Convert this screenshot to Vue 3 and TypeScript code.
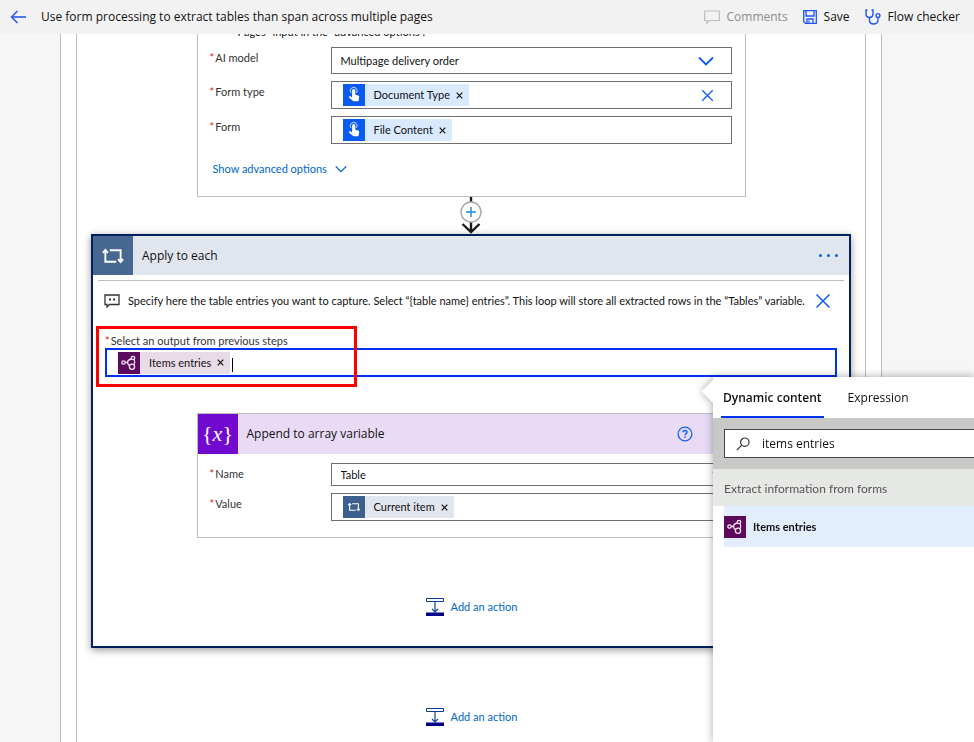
<script setup lang="ts">
import { ref } from 'vue'

const model = ref('Multipage delivery order')
const variableName = ref('Table')
const search = ref('items entries')
const outputText = ref('')
const formType = ref('')
const form = ref('')
const value = ref('')
const activeTab = ref<'dynamic' | 'expression'>('dynamic')
</script>

<template>
  <div class="app">
    <svg class="sprite" aria-hidden="true">
      <symbol id="touch" viewBox="0 0 22 22">
        <path d="M8 8.800a3.400 3.400 0 1 1 5.400 0" fill="none" stroke="#cfe3ff" stroke-width="1" />
        <path d="M9.100 6.700a1.600 1.600 0 0 1 3.200 0v4.100l2.800.7c.8.2 1.200.7 1.100 1.500l-.5 3.200c-.1.7-.6 1.100-1.300 1.100h-3.500c-.6 0-1-.2-1.400-.7L6 13.400c-.3-.4-.2-.8.1-1 .5-.4 1.200-.3 1.700.1l1.300 1z" fill="#fff" />
      </symbol>
      <symbol id="loop" viewBox="0 0 22 22">
        <path d="M8.500 6.500h8.500v9M13.500 15.500H5v-9" fill="none" stroke="#fff" stroke-width="1.500" />
        <path d="M3 8.500L5 6.300L7 8.500M15 13.500L17 15.700L19 13.500" fill="none" stroke="#fff" stroke-width="1.500" />
      </symbol>
      <symbol id="nodes" viewBox="0 0 22 22">
        <g fill="none" stroke="#f3e3f3" stroke-width="1.300">
          <circle cx="5.500" cy="10.500" r="1.700" />
          <circle cx="15" cy="6" r="1.700" />
          <circle cx="14" cy="14.800" r="2.600" />
          <path d="M7.200 10.500h2.400M13.400 7C11 7.400 9.600 8.800 9.600 10.500c0 1.300.8 2.400 2 3M16 7.500c1 1.500 1 3.200 0 5.200" />
        </g>
      </symbol>
      <symbol id="cross" viewBox="0 0 16 16">
        <path d="M1.500 1.500l13 13M14.500 1.500l-13 13" fill="none" stroke="currentColor" stroke-width="1.500" />
      </symbol>
      <symbol id="remove" viewBox="0 0 7 7">
        <path d="M.7.7l5.600 5.600M6.300.7L.7 6.300" fill="none" stroke="#111" stroke-width="1.200" />
      </symbol>
      <symbol id="chevron" viewBox="0 0 16 10">
        <path d="M1 1.500l7 7l7-7" fill="none" stroke="currentColor" stroke-width="1.800" />
      </symbol>
      <symbol id="insert" viewBox="0 0 20 20">
        <path d="M1.500 1.500h17v3h-17z" fill="#fff" stroke="#0a3a9c" />
        <path d="M10 5v10M7 12l3 3l3-3" fill="none" stroke="#0a4aa8" stroke-width="1.200" />
        <path d="M1 15.500h18v3.500H1z" fill="#00008c" />
      </symbol>
    </svg>

    <header class="topbar">
      <button class="icon-btn back" aria-label="Back">
        <svg width="16" height="14" viewBox="0 0 16 14"><path d="M16 7H1.500M7.500 1l-6 6l6 6" fill="none" stroke="#1f4fff" stroke-width="1.400" /></svg>
      </button>
      <h1>Use form processing to extract tables than span across multiple pages</h1>
      <nav class="commands">
        <button class="command" disabled>
          <svg width="16" height="14" viewBox="0 0 16 14"><path d="M.7 1h14.600v9.500H5.500L2.800 13v-2.500H.7z" fill="none" stroke="#bdbdbd" stroke-width="1.200" /></svg>
          Comments
        </button>
        <button class="command">
          <svg width="14" height="14" viewBox="0 0 14 14" fill="none" stroke="#1c54f5" stroke-width="1.300"><path d="M.7.7h12.600v12.600H2.500L.7 11.500zM3 1v5h8V1M4 13V9h6v4M6 10.500v2" /></svg>
          Save
        </button>
        <button class="command">
          <svg width="16" height="16" viewBox="0 0 16 16" fill="none" stroke="#1c54f5" stroke-width="1.400"><path d="M2.500 1H1v3.500C1 7 2.500 8.500 4.500 8.500S8 7 8 4.500V1H6.500M4.500 8.500V11c0 2.500 1.500 4 4 4s4.500-1.500 4.500-4V8.500" /><circle cx="13" cy="6.500" r="1.900" /></svg>
          Flow checker
        </button>
      </nav>
    </header>

    <main class="canvas">
      <div class="scope-outer">
        <div class="scope-inner">
          <section class="card form-card">
            <p class="hint">"Pages" input in the "advanced options".</p>
            <div class="fields">
              <label class="field-label" for="model"><i>*</i>AI model</label>
              <div class="field model">
                <select id="model" v-model="model"><option>Multipage delivery order</option></select>
                <svg class="field-icon" width="16" height="10"><use href="#chevron" /></svg>
              </div>
              <label class="field-label" for="form-type"><i>*</i>Form type</label>
              <div class="field">
                <span class="token blue">
                  <svg width="22" height="22"><use href="#touch" /></svg>
                  Document Type
                  <button aria-label="Remove Document Type"><svg width="7" height="7"><use href="#remove" /></svg></button>
                </span>
                <input id="form-type" v-model="formType" />
                <button class="icon-btn field-icon" aria-label="Clear"><svg width="13" height="13"><use href="#cross" /></svg></button>
              </div>
              <label class="field-label" for="form"><i>*</i>Form</label>
              <div class="field">
                <span class="token blue">
                  <svg width="22" height="22"><use href="#touch" /></svg>
                  File Content
                  <button aria-label="Remove File Content"><svg width="7" height="7"><use href="#remove" /></svg></button>
                </span>
                <input id="form" v-model="form" />
              </div>
            </div>
            <button class="link-btn advanced">
              Show advanced options
              <svg width="12" height="8"><use href="#chevron" /></svg>
            </button>
          </section>

          <button class="connector" aria-label="Insert a step">
            <svg width="24" height="37" viewBox="0 0 24 37">
              <path d="M12 0v5M12 25v10M3.500 27l8.500 8l8.500-8" fill="none" stroke="#1a1a1a" stroke-width="2.400" />
              <circle cx="12" cy="15" r="10" fill="#fff" stroke="#aaa" stroke-width="1.500" />
              <path d="M12 10v10M7 15h10" stroke="#1c86d8" stroke-width="1.400" />
            </svg>
          </button>

          <section class="loop-card">
            <header class="loop-head">
              <span class="loop-icon"><svg width="28" height="28"><use href="#loop" /></svg></span>
              <h2>Apply to each</h2>
              <button class="icon-btn more" aria-label="More"><i></i><i></i><i></i></button>
            </header>
            <div class="note">
              <svg width="16" height="14" viewBox="0 0 16 14"><path d="M1 1h14v9.500H5.500L3 13v-2.500H1z" fill="none" stroke="#333" stroke-width="1.300" /><path d="M5 4.500h2v2H5zM9 4.500h2v2H9z" fill="#333" /></svg>
              <p>Specify here the table entries you want to capture. Select “{table name} entries”. This loop will store all extracted rows in the “Tables” variable.</p>
              <button class="icon-btn" aria-label="Dismiss"><svg width="16" height="16"><use href="#cross" /></svg></button>
            </div>
            <div class="output">
              <label class="field-label" for="output"><i>*</i>Select an output from previous steps</label>
              <div class="field focused">
                <span class="token plum">
                  <svg width="22" height="22"><use href="#nodes" /></svg>
                  Items entries
                  <button aria-label="Remove Items entries"><svg width="7" height="7"><use href="#remove" /></svg></button>
                </span>
                <span class="caret"></span>
                <input id="output" v-model="outputText" />
              </div>
              <div class="highlight"></div>
            </div>

            <section class="card append-card">
              <header class="append-head">
                <span class="var-icon">{<em>x</em>}</span>
                <h2>Append to array variable</h2>
                <button class="icon-btn" aria-label="Help">
                  <svg width="16" height="16" viewBox="0 0 16 16" fill="none" stroke="#1464f0" stroke-width="1.300"><circle cx="8" cy="8" r="6.900" /><path d="M6 6.300c0-1.200.9-1.900 2-1.900s2 .7 2 1.800c0 1.300-2 1.500-2 3.100M8 10.400v1.500" stroke-width="1.500" /></svg>
                </button>
              </header>
              <div class="fields">
                <label class="field-label" for="name"><i>*</i>Name</label>
                <div class="field name">
                  <select id="name" v-model="variableName"><option>Table</option></select>
                  <svg class="field-icon" width="16" height="10"><use href="#chevron" /></svg>
                </div>
                <label class="field-label" for="value"><i>*</i>Value</label>
                <div class="field">
                  <span class="token slate">
                    <svg width="22" height="22"><use href="#loop" x="3" y="3" width="16" height="16" /></svg>
                    Current item
                    <button aria-label="Remove Current item"><svg width="7" height="7"><use href="#remove" /></svg></button>
                  </span>
                  <input id="value" v-model="value" />
                </div>
              </div>
            </section>

            <button class="link-btn add"><svg width="20" height="20"><use href="#insert" /></svg>Add an action</button>
          </section>

          <button class="link-btn add"><svg width="20" height="20"><use href="#insert" /></svg>Add an action</button>
        </div>
      </div>
    </main>

    <aside class="picker">
      <div class="tabs" role="tablist">
        <button role="tab" :class="{ active: activeTab === 'dynamic' }" @click="activeTab = 'dynamic'">Dynamic content</button>
        <button role="tab" :class="{ active: activeTab === 'expression' }" @click="activeTab = 'expression'">Expression</button>
      </div>
      <div class="search">
        <label class="search-box">
          <svg width="14" height="14" viewBox="0 0 14 14" fill="none" stroke="#333" stroke-width="1.200"><circle cx="8.800" cy="5.200" r="4.200" /><path d="M5.800 8.200L.8 13.200" /></svg>
          <input v-model="search" aria-label="Search dynamic content" />
        </label>
      </div>
      <h3>Extract information from forms</h3>
      <button class="result">
        <svg width="22" height="22"><use href="#nodes" /></svg>
        Items entries
      </button>
    </aside>
  </div>
</template>

<style>
body {
  margin: 0;
}
</style>

<style scoped>
.app {
  position: relative;
  display: flex;
  flex-direction: column;
  height: 100vh;
  overflow: hidden;
  background: #f6f6f6;
  color: #111;
  font-family: Lato, "Open Sans", sans-serif;
  font-size: 11px;
  line-height: 16px;
}
.app * {
  box-sizing: border-box;
}
.sprite {
  position: absolute;
  width: 0;
  height: 0;
}
svg {
  display: block;
  flex: none;
}
h1, h2, h3, p {
  margin: 0;
  font-weight: 400;
}
button, input, select {
  margin: 0;
  padding: 0;
  border: 0;
  background: none;
  color: inherit;
  font: inherit;
  outline: 0;
}
.topbar, h2, .tabs button, .search-box {
  font-family: "Open Sans", "Noto Sans", sans-serif;
  font-size: 12px;
}
.icon-btn {
  color: #0a5cf0;
}

.topbar {
  position: relative;
  z-index: 1;
  display: flex;
  flex: none;
  align-items: center;
  height: 34px;
  padding: 0 14px 0 10px;
  background: #f2f2f2;
}
.topbar h1 {
  margin-left: 15px;
  font-size: 12px;
}
.commands {
  display: flex;
  gap: 15px;
  margin-left: auto;
}
.command {
  display: flex;
  align-items: center;
  gap: 7px;
}
.command:disabled {
  color: #8c8c8c;
}

.canvas {
  display: flex;
  flex: 1;
  justify-content: center;
  min-height: 0;
  padding-right: 32px;
}
.scope-outer {
  width: 822px;
  padding: 0 15px;
  border: solid #bdbdbd;
  border-width: 0 1px;
  background: #fff;
}
.scope-inner {
  display: flex;
  flex-direction: column;
  height: 100%;
  padding: 0 14px;
  border: solid #bdbdbd;
  border-width: 0 1px;
}
.card {
  align-self: center;
  width: 549px;
  border: 1px solid #bdbdbd;
  background: #fff;
}
.form-card {
  flex: none;
  margin-top: -9px;
  padding-bottom: 19px;
}
.hint {
  margin-left: 36px;
  padding-bottom: 9px;
  line-height: 12px;
}
.fields {
  display: grid;
  grid-template-columns: 121px 1fr;
  row-gap: 7px;
  padding: 0 13px 0 12px;
}
.field-label {
  display: block;
  padding-top: 3px;
  color: #333;
}
.field-label i {
  margin-right: 1px;
  color: #e81123;
  font-style: normal;
}
.field {
  display: flex;
  align-items: center;
  height: 28px;
  padding: 0 17px 0 11px;
  border: 1px solid #707070;
  background: #fff;
}
.field.model {
  height: 27px;
  padding-left: 9px;
}
.field.name {
  height: 23px;
  padding: 0 3px 0 9px;
}
.field input, .field select {
  flex: 1;
  min-width: 0;
  appearance: none;
}
.field-icon {
  color: #0a5cf0;
}
.token {
  display: flex;
  align-items: center;
  height: 22px;
  padding-right: 6px;
  white-space: nowrap;
}
.token > svg {
  margin-right: 9px;
}
.token button {
  margin-left: 6px;
}
.token.blue {
  background: #d9eaff;
}
.token.blue > svg {
  background: #0a5cf0;
}
.token.plum {
  background: #e9dce9;
}
.token.plum > svg, .result svg {
  background: #5c0a5c;
}
.token.slate {
  background: #e1e6ee;
}
.token.slate > svg {
  background: #3c618e;
}
.link-btn {
  display: flex;
  align-items: center;
  gap: 8px;
  color: #0066cc;
}
.advanced {
  margin: 17px 0 0 15px;
}
.connector {
  align-self: center;
  height: 37px;
}

.loop-card {
  display: flex;
  flex: none;
  flex-direction: column;
  height: 414px;
  border: 2px solid #00205f;
  background: #fff;
  box-shadow: 0 2px 8px rgba(0, 0, 0, 0.4);
}
.loop-head {
  display: flex;
  align-items: center;
  height: 39px;
  padding-right: 11px;
  background: #e1e6ee;
}
.loop-icon {
  display: grid;
  place-items: center;
  width: 40px;
  height: 39px;
  background: #476991;
}
h2 {
  margin-left: 9px;
}
.more {
  display: flex;
  gap: 5px;
  margin-left: auto;
}
.more i {
  width: 3px;
  height: 3px;
  border-radius: 50%;
  background: #0066cc;
}
.note {
  display: flex;
  align-items: center;
  height: 40px;
  margin: 5px 5px 0;
  padding: 0 13px 0 6px;
  border-top: 1px solid #bdbdbd;
}
.note p {
  margin-left: 8px;
  white-space: nowrap;
}
.note .icon-btn {
  margin-left: auto;
}
.output {
  position: relative;
  margin: 11px 12px 0;
}
.output .field-label {
  padding-top: 2px;
  line-height: 15px;
}
.focused {
  height: 29px;
  border: 2px solid #0033f0;
}
.caret {
  width: 1px;
  height: 14px;
  margin: 4px 0 0 2px;
  background: #000;
}
.highlight {
  position: absolute;
  top: -5px;
  left: -9px;
  width: 261px;
  height: 61px;
  border: 3px solid #f00;
  pointer-events: none;
}
.append-card {
  margin-top: 36px;
  padding-bottom: 16px;
}
.append-head {
  display: flex;
  align-items: center;
  height: 40px;
  margin-bottom: 9px;
  padding-right: 52px;
  background: #e9daf6;
}
.var-icon {
  display: grid;
  grid-auto-flow: column;
  place-content: center;
  width: 40px;
  height: 40px;
  background: #7109cf;
  color: #fff;
  font: 22px/36px "Liberation Serif", serif;
}
.append-head .icon-btn {
  margin-left: auto;
}
.add {
  align-self: center;
  gap: 6px;
  margin-top: 59px;
}

.picker {
  position: absolute;
  z-index: 2;
  top: 377px;
  right: 0;
  bottom: 0;
  left: 713px;
  background: #fff;
  filter: drop-shadow(0 0 4px rgba(0, 0, 0, 0.35));
}
.picker::before {
  position: absolute;
  top: 6px;
  left: -8px;
  width: 17px;
  height: 17px;
  background: #fff;
  content: "";
  transform: rotate(45deg);
}
.tabs {
  position: relative;
  display: flex;
  gap: 22px;
  padding-left: 8px;
}
.tabs button {
  height: 41px;
  padding: 3px 2px 0;
  border-bottom: 2px solid transparent;
}
.tabs .active {
  border-color: #0033f0;
  font-weight: 600;
}
.search {
  height: 51px;
  padding: 11px 0 0 11px;
  background: #c8c9c7;
}
.search-box {
  display: flex;
  align-items: center;
  gap: 12px;
  height: 29px;
  padding-left: 11px;
  border: 1px solid #444;
  border-right: 0;
  background: #fff;
}
.search-box input {
  flex: 1;
  min-width: 0;
}
h3 {
  padding: 12px 11px 9px;
  background: #e6e8e5;
  color: #555;
  font-size: 12px;
}
.result {
  display: flex;
  align-items: center;
  gap: 7px;
  width: calc(100% - 11px);
  height: 41px;
  margin-left: 11px;
  background: #e2eefe;
  font-weight: 700;
}
</style>
